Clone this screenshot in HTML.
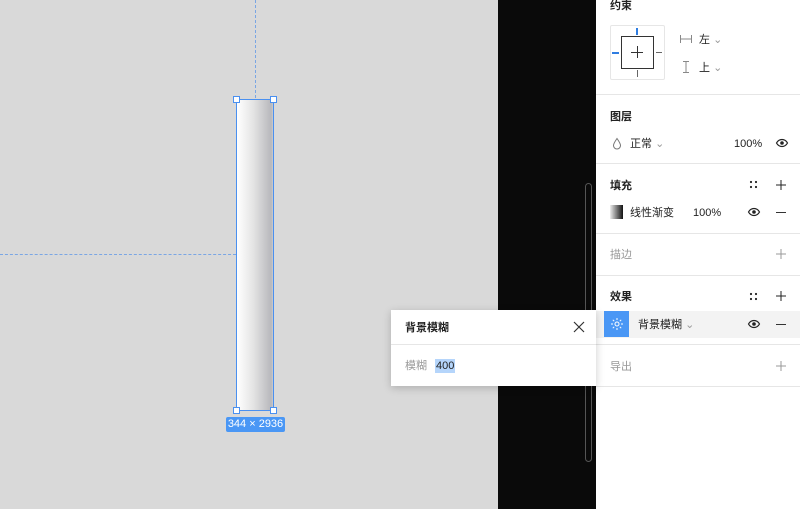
<!DOCTYPE html><html><head><meta charset="utf-8"><style>
*{margin:0;padding:0;box-sizing:border-box}
body{width:800px;height:509px;position:relative;overflow:hidden;background:#d9d9d9;font-family:"Liberation Sans","Noto Sans CJK SC",sans-serif;font-size:11px;color:#222;line-height:14px}
.a{position:absolute}
.hr{position:absolute;left:596px;width:204px;height:1px;background:#e6e6e6}
.t{position:absolute;font-weight:bold;font-size:11px;line-height:14px}
.g{color:#999}
svg{position:absolute;overflow:visible}
.x{margin-top:1px}
</style></head><body>
<div class="a" style="left:498px;top:0;width:98px;height:509px;background:#0a0a0a"></div>
<div class="a" style="left:585px;top:183px;width:7px;height:279px;border:1px solid #555;border-radius:4px"></div>
<div class="a" style="left:596px;top:0;width:204px;height:509px;background:#fff"></div>
<div class="a" style="left:255px;top:0;height:98px;border-left:1px dashed #7aa6e4"></div>
<div class="a" style="left:0;top:254px;width:236px;border-top:1px dashed #7aa6e4"></div>
<div class="a" style="left:236px;top:99px;width:38px;height:312px;border:1px solid #4a90f0;background:linear-gradient(90deg,#fff,#e4e4e4 45%,#b8b8bc 95%,#ccc)"></div>
<div class="a" style="left:233px;top:96px;width:7px;height:7px;background:#fff;border:1px solid #4a90f0"></div>
<div class="a" style="left:270px;top:96px;width:7px;height:7px;background:#fff;border:1px solid #4a90f0"></div>
<div class="a" style="left:233px;top:407px;width:7px;height:7px;background:#fff;border:1px solid #4a90f0"></div>
<div class="a" style="left:270px;top:407px;width:7px;height:7px;background:#fff;border:1px solid #4a90f0"></div>
<div class="a" style="left:226px;top:417px;width:59px;height:15px;background:#4a97f5;border-radius:2px;color:#fff;font-size:11px;text-align:center;line-height:15px">344 × 2936</div>

<div class="t" style="left:610px;top:-1px">约束</div>
<div class="a" style="left:610px;top:25px;width:55px;height:55px;border:1px solid #e6e6e6;border-radius:2px"></div>
<div class="a" style="left:621px;top:36px;width:33px;height:33px;border:1px solid #333"></div>
<div class="a" style="left:631px;top:52px;width:12px;height:1px;background:#333"></div>
<div class="a" style="left:637px;top:46px;width:1px;height:12px;background:#333"></div>
<div class="a" style="left:636px;top:28px;width:2px;height:7px;background:#2f7de1"></div>
<div class="a" style="left:612px;top:52px;width:7px;height:2px;background:#2f7de1"></div>
<div class="a" style="left:656px;top:52px;width:6px;height:1px;background:#666"></div>
<div class="a" style="left:637px;top:70px;width:1px;height:7px;background:#666"></div>
<svg style="left:680px;top:35px" width="12" height="8"><path d="M.5 0v8M11.5 0v8M.5 4h11" stroke="#888" fill="none"/></svg>
<div class="a" style="left:699px;top:33px">左 <span class="g">⌄</span></div>
<svg style="left:682px;top:61px" width="8" height="12"><path d="M1 .5h6M1 11.5h6M4 .5v11" stroke="#888" fill="none"/></svg>
<div class="a" style="left:699px;top:61px">上 <span class="g">⌄</span></div>
<div class="hr" style="top:94px"></div>
<div class="t" style="left:610px;top:110px">图层</div>
<svg style="left:613px;top:138px" width="8" height="11"><path d="M4 .5C2 3.5 .5 5.5 .5 7.5a3.5 3.5 0 0 0 7 0C7.5 5.5 6 3.5 4 .5z" stroke="#777" fill="none"/></svg>
<div class="a" style="left:630px;top:137px">正常 <span class="g">⌄</span></div>
<div class="a" style="left:734px;top:137px">100%</div>
<svg style="left:776px;top:139px" width="12" height="8"><path d="M.5 4C2 1.3 4 .5 6 .5s4 .8 5.5 3.5C10 6.7 8 7.5 6 7.5S2 6.7.5 4z" stroke="#222" fill="none" stroke-width="1.2"/><circle cx="6" cy="4" r="1.8" fill="#222"/></svg>
<div class="hr" style="top:163px"></div>
<div class="t" style="left:610px;top:179px">填充</div>
<svg style="left:750px;top:181px" width="7" height="7"><circle cx="1" cy="1" r="1.1" fill="#222"/><circle cx="6" cy="1" r="1.1" fill="#222"/><circle cx="1" cy="6" r="1.1" fill="#222"/><circle cx="6" cy="6" r="1.1" fill="#222"/></svg>
<svg style="left:776px;top:180px" width="10" height="10"><path d="M5 0v10M0 5h10" stroke="#222"/></svg>
<div class="a" style="left:610px;top:205px;width:13px;height:14px;background:linear-gradient(90deg,#eee,#111)"></div>
<div class="a" style="left:630px;top:206px">线性渐变</div>
<div class="a" style="left:693px;top:206px">100%</div>
<svg style="left:748px;top:208px" width="12" height="8"><path d="M.5 4C2 1.3 4 .5 6 .5s4 .8 5.5 3.5C10 6.7 8 7.5 6 7.5S2 6.7.5 4z" stroke="#222" fill="none" stroke-width="1.2"/><circle cx="6" cy="4" r="1.8" fill="#222"/></svg>
<div class="a" style="left:776px;top:212px;width:10px;height:1px;background:#333"></div>
<div class="hr" style="top:233px"></div>
<div class="a g" style="left:610px;top:248px">描边</div>
<svg style="left:776px;top:249px" width="10" height="10"><path d="M5 0v10M0 5h10" stroke="#999"/></svg>
<div class="hr" style="top:275px"></div>
<div class="t" style="left:610px;top:290px">效果</div>
<svg style="left:750px;top:293px" width="7" height="7"><circle cx="1" cy="1" r="1.1" fill="#222"/><circle cx="6" cy="1" r="1.1" fill="#222"/><circle cx="1" cy="6" r="1.1" fill="#222"/><circle cx="6" cy="6" r="1.1" fill="#222"/></svg>
<svg style="left:776px;top:291px" width="10" height="10"><path d="M5 0v10M0 5h10" stroke="#222"/></svg>
<div class="a" style="left:596px;top:311px;width:204px;height:27px;background:#f3f3f3"></div>
<div class="a" style="left:604px;top:311px;width:25px;height:26px;background:#4a97f5"></div>
<svg style="left:610px;top:317px" width="14" height="14"><circle cx="7" cy="7" r="2" stroke="#fff" fill="none"/><path d="M7 1v2M7 11v2M1 7h2M11 7h2M2.8 2.8l1.4 1.4M9.8 9.8l1.4 1.4M2.8 11.2l1.4-1.4M9.8 4.2l1.4-1.4" stroke="#fff"/></svg>
<div class="a" style="left:638px;top:318px">背景模糊 <span class="g">⌄</span></div>
<svg style="left:748px;top:320px" width="12" height="8"><path d="M.5 4C2 1.3 4 .5 6 .5s4 .8 5.5 3.5C10 6.7 8 7.5 6 7.5S2 6.7.5 4z" stroke="#222" fill="none" stroke-width="1.2"/><circle cx="6" cy="4" r="1.8" fill="#222"/></svg>
<div class="a" style="left:776px;top:324px;width:10px;height:1px;background:#333"></div>
<div class="hr" style="top:344px"></div>
<div class="a g" style="left:610px;top:360px">导出</div>
<svg style="left:776px;top:361px" width="10" height="10"><path d="M5 0v10M0 5h10" stroke="#999"/></svg>
<div class="hr" style="top:386px"></div>

<div class="a" style="left:391px;top:310px;width:205px;height:76px;background:#fff;box-shadow:0 2px 8px rgba(0,0,0,.2)"></div>
<div class="t" style="left:405px;top:321px">背景模糊</div>
<svg style="left:574px;top:322px" width="10" height="10"><path d="M0 0l10 10M10 0L0 10" stroke="#333" stroke-width="1.2"/></svg>
<div class="a" style="left:391px;top:344px;width:205px;height:1px;background:#e6e6e6"></div>
<div class="a g" style="left:405px;top:359px">模糊</div>
<div class="a" style="left:435px;top:359px;background:#b5d5fb;padding:0 1px">400</div>
</body></html>
